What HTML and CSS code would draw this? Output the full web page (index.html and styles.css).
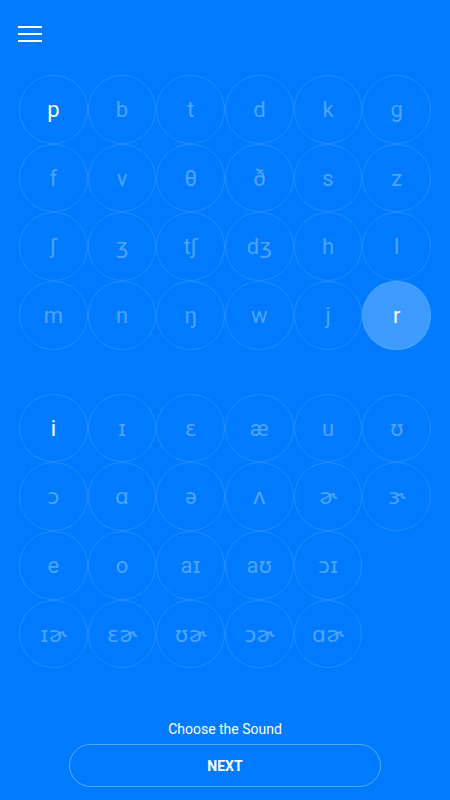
FILE: index.html
```html
<!DOCTYPE html>
<html lang="en">
<head>
  <meta charset="UTF-8">
  <title>Choose the Sound</title>
  <link rel="stylesheet" href="styles.css">
</head>
<body>
  <div class="page">
    <div class="topbar">
      <button class="menu" aria-label="Menu">
        <svg width="24" height="16" viewBox="0 0 24 16">
          <rect x="0" y="0" width="24" height="2" fill="#fff"/>
          <rect x="0" y="7" width="24" height="2" fill="#fff"/>
          <rect x="0" y="14" width="24" height="2" fill="#fff"/>
        </svg>
      </button>
    </div>

    <div class="sounds" id="consonants"></div>
    <div class="sounds vowels" id="vowels"></div>

    <div class="footer">
      <p class="hint">Choose the Sound</p>
      <button class="next">NEXT</button>
    </div>
  </div>

  <script>
    const consonants = ['p', 'b', 't', 'd', 'k', 'g', 'f', 'v', 'θ', 'ð', 's', 'z',
      'ʃ', 'ʒ', 'tʃ', 'dʒ', 'h', 'l', 'm', 'n', 'ŋ', 'w', 'j', 'r'];
    const vowels = ['i', 'ɪ', 'ɛ', 'æ', 'u', 'ʊ', 'ɔ', 'ɑ', 'ə', 'ʌ', 'ɚ', 'ɝ',
      'e', 'o', 'aɪ', 'aʊ', 'ɔɪ', null, 'ɪɚ', 'ɛɚ', 'ʊɚ', 'ɔɚ', 'ɑɚ'];

    function render(list, el, bright, selected) {
      list.forEach(sound => {
        const cell = document.createElement('div');
        if (sound === null) {
          cell.className = 'blank';
        } else {
          cell.className = 'sound';
          if (sound === bright) cell.classList.add('bright');
          if (sound === selected) cell.classList.add('selected');
          cell.textContent = sound;
        }
        el.appendChild(cell);
      });
    }

    render(consonants, document.getElementById('consonants'), 'p', 'r');
    render(vowels, document.getElementById('vowels'), 'i', null);
  </script>
</body>
</html>
```

FILE: styles.css
```css
body {
  margin: 0;
  background: #007bff;
  font-family: Roboto, "DejaVu Sans", sans-serif;
  color: #fff;
}
.page {
  display: flex;
  flex-direction: column;
  min-height: 800px;
}
.topbar {
  height: 75px;
  padding: 26px 0 0 18px;
  box-sizing: border-box;
}
.menu {
  background: none;
  border: 0;
  padding: 0;
  display: block;
}
.menu svg {
  display: block;
}
.sounds {
  display: grid;
  grid-template-columns: repeat(6, 1fr);
  padding: 0 19px;
}
.vowels {
  margin-top: 44px;
}
.sound, .blank {
  aspect-ratio: 1;
}
.sound {
  display: flex;
  align-items: center;
  justify-content: center;
  border: 1px solid rgba(255, 255, 255, 0.13);
  border-radius: 50%;
  font-size: 22px;
  color: rgba(255, 255, 255, 0.33);
}
.sound.bright {
  color: #fff;
}
.sound.selected {
  background: rgba(255, 255, 255, 0.24);
  color: #fff;
}
.footer {
  margin-top: auto;
  padding: 0 69px 13px;
  text-align: center;
}
.hint {
  margin: 0 0 5px;
  font-size: 14px;
  line-height: 20px;
}
.next {
  width: 100%;
  height: 43px;
  background: none;
  border: 1px solid rgba(255, 255, 255, 0.35);
  border-radius: 22px;
  color: #fff;
  font-family: Roboto, sans-serif;
  font-size: 14px;
  font-weight: bold;
}
```
